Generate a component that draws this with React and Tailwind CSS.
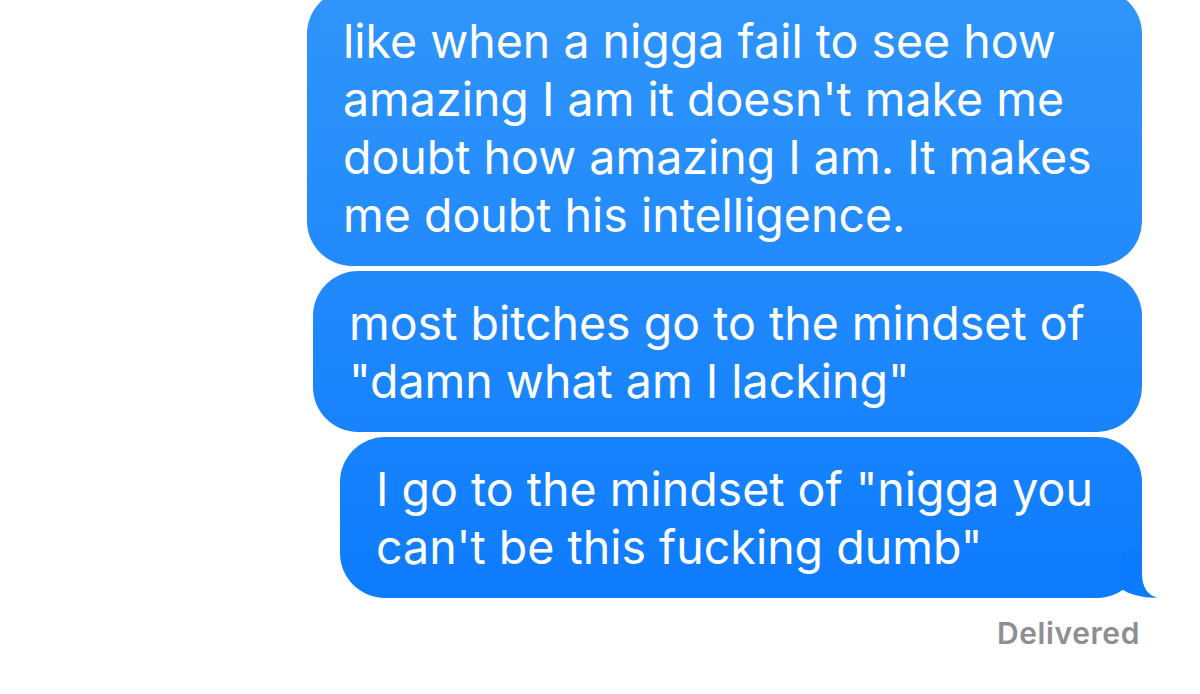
const messages = [
  {
    lines: ['like when a nigga fail to see how', "amazing I am it doesn't make me", 'doubt how amazing I am. It makes', 'me doubt his intelligence.'],
    width: 'w-[835px]',
    extra: '-mt-[11px]',
  },
  {
    lines: ['most bitches go to the mindset of', '"damn what am I lacking"'],
    width: 'w-[829px]',
    extra: '',
  },
  {
    lines: ['I go to the mindset of "nigga you', 'can\'t be this fucking dumb"'],
    width: 'w-[802px]',
    extra: '',
    tail: true,
  },
];

function Bubble({ lines, width, extra, tail }) {
  return (
    <div
      className={`relative ${width} ${extra} rounded-[45px] bg-gradient-to-b from-[#2f95fb] to-[#0577fe] bg-fixed pl-[36px] pt-[23px] pb-[22px] text-[46.5px] leading-[58px] text-white`}
    >
      {lines.map((line) => (
        <div key={line} className="whitespace-nowrap">{line}</div>
      ))}
      {tail && (
        <svg className="absolute right-[-16px] bottom-0 h-[49px] w-[60px]" viewBox="0 0 60 49">
          <path d="M44 0 L44 24 Q44 45 59.5 48.6 C49 49.6 31 46 23 39.5 L23 0 Z" fill="#0c7cfe" />
        </svg>
      )}
    </div>
  );
}

export default function App() {
  return (
    <div className="h-[694px] w-[1200px] overflow-hidden bg-white font-['Inter','Liberation_Sans',sans-serif]">
      <div className="flex flex-col items-end gap-[5px] pr-[58px]">
        {messages.map((m, i) => (
          <Bubble key={i} {...m} />
        ))}
      </div>
      <div className="mt-[17px] pr-[60px] text-right text-[30px] font-semibold leading-[36px] tracking-[0.6px] text-[#8e8e93]">
        Delivered
      </div>
    </div>
  );
}
